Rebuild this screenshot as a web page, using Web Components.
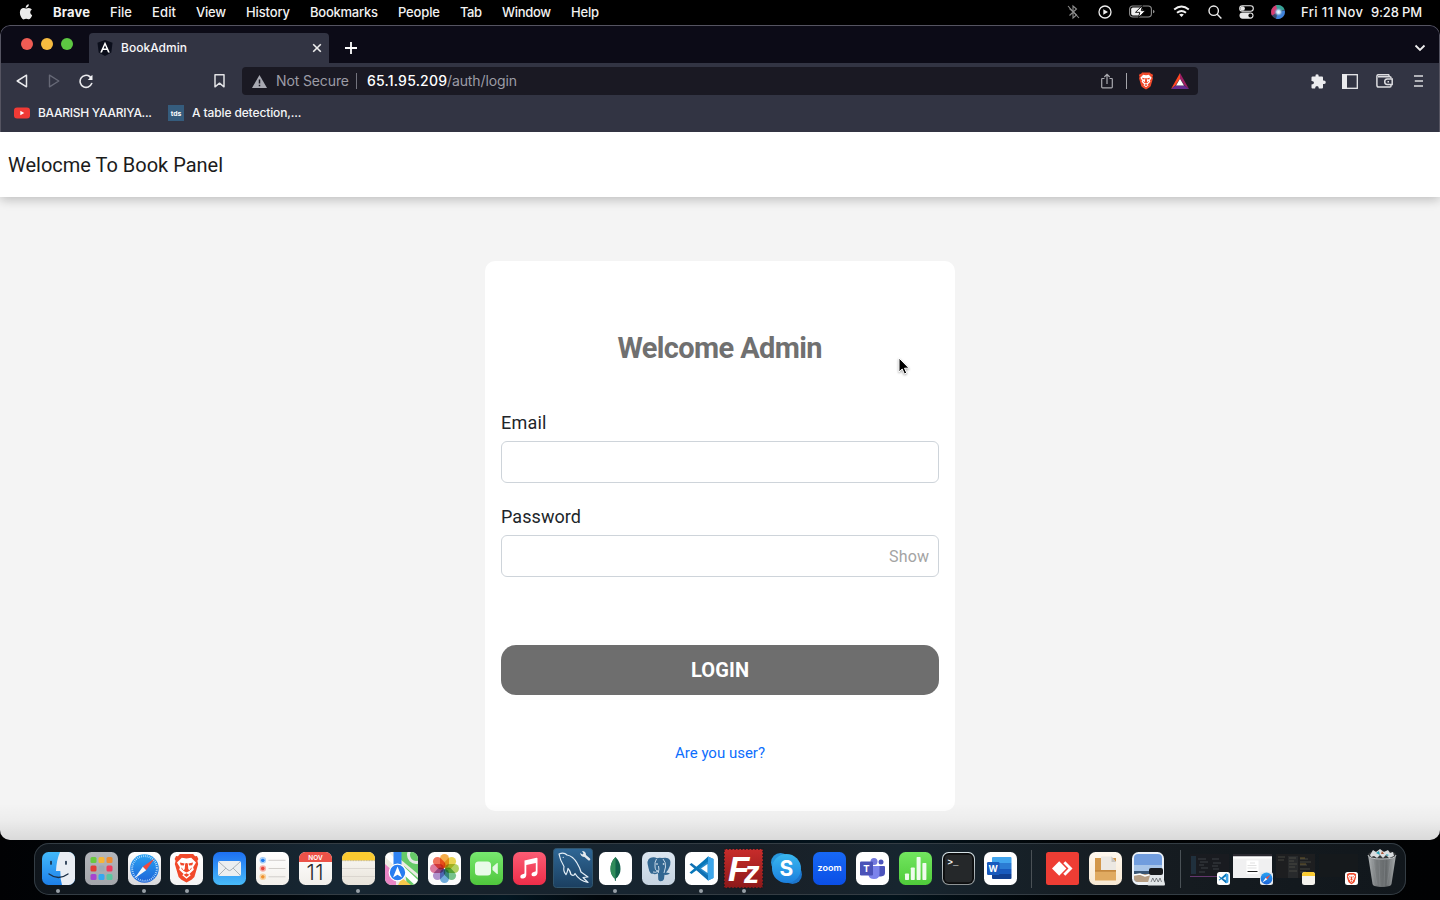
<!DOCTYPE html>
<html lang="en">
<head>
<meta charset="utf-8">
<title>BookAdmin</title>
<style>
html,body{margin:0;height:100%;background:#000;overflow:hidden}
body{font-family:Inter,"Liberation Sans",sans-serif}
</style>
</head>
<body>
<desk-top></desk-top>
<script>
const define = (name, css, html, setup) => customElements.define(name, class extends HTMLElement {
  constructor() {
    super();
    this.attachShadow({mode: 'open'});
  }
  connectedCallback() {
    if (this.ready) return;
    this.ready = true;
    const t = document.createElement('template');
    t.innerHTML = `<style>*{box-sizing:border-box}${css}</style>${typeof html === 'function' ? html(this) : html}`;
    this.shadowRoot.append(t.content.cloneNode(true));
    if (setup) setup(this);
  }
});

/* A one-line label tracked to an exact width. */
define('fit-label', ':host{display:block;white-space:nowrap;flex:none}span{display:inline-block}', '<span><slot></slot></span>', el => {
  const w = parseFloat(el.getAttribute('w'));
  el.style.width = w + 'px';
  const span = el.shadowRoot.querySelector('span');
  const n = el.textContent.length - 1;
  span.style.letterSpacing = ((w - span.getBoundingClientRect().width) / n).toFixed(3) + 'px';
});

const LION = `<path fill="#f1492a" d="M9 1h14l2 2.500 2-.3 1.500 3-1 2 .8 3.500-4 13.500-3 3L16 31l-5.300-2.800-3-3L3.700 11.700l.8-3.500-1-2L5 3.200l2 .3z"/><path fill="#fff" d="M11 5l5 .8 5-.8 5 5-3 5 .7 2.500-4.700 4.500 1.500 1.500L16 27l-4.500-3.500L13 22l-4.700-4.500L9 15l-3-5z"/><path fill="#f1492a" d="M9 10l5 1-.8 2.200-3.200-.4zM23 10l-5 1 .8 2.200 3.200-.4zM14.600 11l1.400-.4 1.400.4.5 6 2 1.500-3.900 2-3.900-2 2-1.500zM10 15l2.500 2-1 1zM22 15l-2.500 2 1 1zM13 23l3-1.700 3 1.700-3 2.200z"/>`;
const VS = `<path fill="#2489ca" d="M22.500 4L28 6.500v19L22.500 28 10 16.500z"/><path fill="#1070b3" d="M4 12l2-1.500L23 23.500V28z"/><path fill="#0877b9" d="M4 20l2 1.500L23 8.500V4z"/><path fill="#3ca5ea" d="M22.500 4L28 6.500v19L22.500 28z"/><path fill="#fff" d="M22 11.500v9L15.500 16z"/>`;
const COMPASS = `<circle cx="16" cy="16" r="14.300" fill="url(#c)"/><circle cx="16" cy="16" r="12.400" fill="none" stroke="#cfeaff" stroke-width="2" stroke-dasharray=".7 1.250"/><path fill="#f24a3f" d="M26 6L17.700 17.700 14.300 14.300z"/><path fill="#f4f7fa" d="M6 26L14.300 14.300 17.700 17.700z"/>`;
const grad = (id, a, b) => `<linearGradient id="${id}" x2="0" y2="1"><stop stop-color="${a}"/><stop offset="1" stop-color="${b}"/></linearGradient>`;
const tile = (a, b, body, defs = '') => `<svg viewBox="0 0 33 33" width="33" height="33"><defs>${grad('g', a, b)}<clipPath id="k"><rect width="33" height="33" rx="6.500"/></clipPath>${defs}</defs><g clip-path="url(#k)"><rect width="33" height="33" fill="url(#g)"/>${body}</g></svg>`;
const petals = () => ['#f5a02c','#e8cf35','#a5cb48','#5fbb79','#58a0d8','#a583c8','#d8638e','#ef5b3f'].map((c, i) =>
  `<rect x="12" y="2" width="9" height="14" rx="4.500" fill="${c}" fill-opacity=".85" transform="rotate(${i * 45} 16.500 16.500)" style="mix-blend-mode:multiply"/>`).join('');
const launch = () => ['#68c93f','#f5b638','#ef8d32','#e23c36','#9fa9b2','#ef3b5f','#a644cf','#36a7f0','#59c6a0'].map((c, i) =>
  `<rect x="${5.500 + (i % 3) * 8}" y="${5 + Math.floor(i / 3) * 8.500}" width="6" height="6" rx="1.500" fill="${c}"/>`).join('');

const ICONS = {
  finder: tile('#43b9fb', '#1d7fe8', `<path d="M18 0h15v33H20q-1.800-6-1.700-14H14Q14.500 8 18 0z" fill="#e9edf3"/><path d="M9 9.500v2.500M24 9.500v2.500" stroke="#1b2f47" stroke-width="1.700" stroke-linecap="round"/><path d="M7 22q9.500 7 19 0" fill="none" stroke="#1b2f47" stroke-width="1.300" stroke-linecap="round"/>`),
  launchpad: tile('#b3b6bb', '#a3a5aa', launch()),
  safari: tile('#fff', '#d8d8db', `<g transform="translate(.5 .5)">${COMPASS}</g>`, grad('c', '#2aa3f3', '#1c63d8')),
  brave: tile('#fff', '#f4f4f4', `<g transform="translate(1.300 1) scale(.95)">${LION}</g>`),
  mail: tile('#1d70f2', '#48bbf9', `<rect x="5" y="9" width="23" height="15" rx="2" fill="#eceef0"/><path d="M6 10l9 8q1.500 1.200 3 0l9-8M6 23l7-7M27 23l-7-7" fill="none" stroke="#a3aab1" stroke-width=".9"/>`),
  reminders: tile('#fff', '#f2efea', `<g fill="none" stroke-width="1.200"><circle cx="6.800" cy="8.300" r="2.700" stroke="#a3cdf8"/><circle cx="6.800" cy="16.500" r="2.700" stroke="#f5b0a8"/><circle cx="6.800" cy="24.800" r="2.700" stroke="#f7d3a0"/></g><circle cx="6.800" cy="8.300" r="1.900" fill="#1f7df0"/><circle cx="6.800" cy="16.500" r="1.900" fill="#e8483d"/><circle cx="6.800" cy="24.800" r="1.900" fill="#f0932e"/><path d="M12.500 8.300h17M12.500 16.500h17M12.500 24.800h17" stroke="#cdcac6" stroke-width=".9"/>`),
  calendar: tile('#fff', '#f1eeea', `<path fill="#ec5248" d="M0 0h33v10H0z"/><text x="16.500" y="7.900" font-size="6.500" font-weight="600" fill="#fff" text-anchor="middle" textLength="14.500">NOV</text><text x="16" y="28" font-size="21" font-weight="300" fill="#2c2c2c" text-anchor="middle" textLength="17">11</text>`),
  notes: tile('#fbfaf6', '#e8e3da', `<path fill="#fbcb31" d="M0 0h33v8.500H0z"/><path d="M0 8.700h33" stroke="#aaa38e" stroke-width=".8" stroke-dasharray=".8 .8"/><path d="M0 16.500h33M0 24.500h33" stroke="#d5d1ca" stroke-width=".8"/>`),
  maps: tile('#f1eee4', '#e8e8e2', `<path fill="#66cb68" d="M15 0h18v22L15 7z"/><path fill="#66cb68" d="M19 14l14 12v7H22z"/><path fill="#e985c4" d="M0 12l11 10v11H0z"/><path fill="#fff" d="M0 5L33 36V28L0-3z"/><path fill="#f7c84b" d="M17 26l9 7H13z"/><path fill="#2f83f3" d="M8.500 0h8v20h-8z"/><circle cx="31" cy="3" r="7.500" fill="none" stroke="#e6e9e7" stroke-width="3"/><circle cx="12.500" cy="20.500" r="8.300" fill="#287df1" stroke="#fff" stroke-width="1.200"/><path fill="#fff" d="M12.500 14.500l4.500 11-4.500-2.700L8 25.500z"/>`),
  photos: tile('#fff', '#fbfbfb', petals()),
  facetime: tile('#77e86f', '#4fc63c', `<rect x="5" y="9.500" width="16" height="14" rx="3.500" fill="#e9fbe9"/><path fill="#e3f9e3" d="M22.500 15l4.500-4q.8-.4.8.5v10q0 .9-.8.5l-4.500-4z"/>`),
  music: tile('#fb5c74', '#ee2d49', `<path fill="#fff" d="M11.500 8.500l12-2.700q1-.2 1 .8v14q0 3-3 3.600-2.800.5-3-1.500 0-2.300 3-2.900 1.300-.2 1.300-1V11l-9.500 2.100v9.700q0 3-3 3.600-2.800.5-3-1.500 0-2.300 3-2.900 1.200-.2 1.200-1z"/>`),
  mysql: `<svg viewBox="0 0 40 40" width="40" height="40"><defs>${grad('g', '#2f6796', '#1b3f60')}</defs><rect x=".5" y=".5" width="39" height="39" rx="3" fill="url(#g)" stroke="#31566f"/><path d="M6 6q5-2 8 1 6 1 10 8 3 5 4 9l7 5-5 .5 5 5q-9-2-13-9-1 3-4 1-1-4-3-6-1 5-2 6-3-3-2-8Q7 12 6 6zM10 9l.5.8" fill="none" stroke="#e4eef6" stroke-width="1.200" stroke-linejoin="round"/><path d="M29 3q4 0 4 4l4 3.500q1 2-1.500 2L31.500 9q-3.500 0-4.500-4l2.500 1.500 1-1z" fill="#e5eaef"/></svg>`,
  mongo: tile('#fff', '#fff', `<path fill="#116149" d="M16.500 5q5 5 5 12 0 6-4.500 9.500l-.3 2.500h-.7l-.3-2.500Q11.500 23 11.500 17q0-7 5-12z"/><path fill="#2f8b5a" d="M16.500 5v22q-5-3.500-5-10 0-7 5-12z"/>`),
  postgres: tile('#dbe6f1', '#c6d3e0', `<path fill="#336791" d="M8 6q4-1.500 7 .3 2-.8 5-.2 6-1.500 8 2 1.500 4-2 10l-2 2.500 4 .7q-2 2-5.500 1.500l-.5 4.200q-1 2.500-3.500 2.300-2.500-.3-2.300-3l-.2-5Q12 23 11 21.500 8 23 6.500 16 4 8 8 6z"/><path d="M14.500 7q-2 3-1.500 7 0 5 3 5M21 7q3 3 2.500 8L22 21M11 20q3 1 5-1M16.500 14q1 3-.3 7" fill="none" stroke="#d9e5f0" stroke-width=".9"/><circle cx="15" cy="12" r=".8" fill="#fff"/><circle cx="21.500" cy="12" r=".8" fill="#fff"/>`),
  vscode: tile('#fff', '#fff', `<g transform="translate(.500 .500)">${VS}</g>`),
  filezilla: `<svg viewBox="0 0 41 41" width="41" height="41"><defs>${grad('g', '#c82c2b', '#8c191a')}</defs><rect x="1" y="1" width="39" height="39" fill="url(#g)"/><rect x="1" y="1" width="39" height="39" fill="none" stroke="#171c22" stroke-width="1.500" stroke-dasharray="1.700 1.700"/><g font-family="Liberation Sans" font-style="italic" font-weight="700" fill="#fff"><text x="5" y="32.500" font-size="35">F<tspan dx="-5.500" dy="2.500" font-size="31">z</tspan></text></g></svg>`,
  skype: `<svg viewBox="0 0 33 33" width="33" height="33"><defs>${grad('g', '#39b8f0', '#1b7fdd')}</defs><circle cx="10.500" cy="10.500" r="9.500" fill="#2796dc"/><circle cx="22.500" cy="22.500" r="9.500" fill="#1c75cc"/><circle cx="16.500" cy="16.500" r="14.500" fill="url(#g)"/><text x="16.500" y="24" font-size="21" font-weight="700" fill="#fff" text-anchor="middle">S</text></svg>`,
  zoom: tile('#1768f5', '#0b4fe6', `<text x="16.500" y="19.300" font-size="9" font-weight="600" fill="#fff" text-anchor="middle" textLength="24" lengthAdjust="spacingAndGlyphs">zoom</text>`),
  teams: tile('#fff', '#fff', `<circle cx="18" cy="9.500" r="3.500" fill="#7278dd"/><circle cx="25" cy="10" r="2.500" fill="#4b53bc"/><path fill="#4b53bc" d="M22 14h6q1 0 1 1v6q0 3-4 3.500h-3z"/><path fill="#7b83eb" d="M13 14h10.500v8q0 5-5.500 5-5 0-5.500-4z"/><rect x="4" y="9.500" width="13" height="14" rx="1.200" fill="#4a52b8"/><text x="10.500" y="20" font-size="9.500" font-weight="700" fill="#fff" text-anchor="middle">T</text>`),
  numbers: tile('#72e65f', '#4fcb3a', `<g fill="#effbed"><rect x="6" y="21.500" width="4" height="6.500" rx=".7"/><rect x="11.800" y="15.500" width="4" height="12.500" rx=".7"/><rect x="17.600" y="5" width="4" height="23" rx=".7"/><rect x="23.400" y="11" width="4" height="17" rx=".7"/></g>`),
  terminal: tile('#d6e3e8', '#8d9294', `<rect x="1" y="1" width="31" height="31" rx="5.800" fill="#0c0d0e"/><rect x="2.800" y="2.800" width="27.400" height="27.400" rx="4" fill="#25282a"/><text x="5.500" y="12.500" font-size="9" font-weight="700" fill="#f4f4f4" font-family="Liberation Mono">&gt;_</text>`),
  word: tile('#fff', '#fff', `<path fill="#41a5ee" d="M9 5h17.500q1 0 1 1v5H8V6q0-1 1-1z"/><path fill="#2b7cd3" d="M8 11h19.500v6H8z"/><path fill="#185abd" d="M8 17h19.500v5H8z"/><path fill="#103f91" d="M8 22h19.500v4q0 1-1 1H9q-1 0-1-1z"/><rect x="3" y="10" width="12.500" height="13" rx="1.200" fill="#185abd"/><text x="9.200" y="20" font-size="9" font-weight="700" fill="#fff" text-anchor="middle">W</text>`),
  anydesk: `<svg viewBox="0 0 33 33" width="33" height="33"><rect width="33" height="33" rx="2.500" fill="#ee3d34"/><path fill="#fff" d="M13.200 9.300l7.200 7.200-7.200 7.200L6 16.500zM17.300 11.300l2-2 7.200 7.200-7.200 7.200-2-2 5.200-5.200z"/></svg>`,
  boxes: tile('#fff8ee', '#f7e8d3', `<path fill="#d3974a" d="M6 6h21v22H6z"/><path fill="#e0aa61" d="M6 19h21v9.500H6z"/><path fill="#ece8e2" d="M12 4.500h10.500L27 10v8H12z"/><path fill="#c8c4bf" d="M22.500 4.500L27 10h-4.500z"/><path d="M6 19h21" stroke="#b67832"/>`),
  preview: `<svg viewBox="0 0 35 35" width="35" height="35"><rect x="1" y="1" width="32" height="33" rx="6.500" fill="#edf2f8"/><rect x="3" y="3" width="28" height="28" rx="4" fill="#719dde"/><path fill="#a8c5e8" d="M3 14h28v7H3z"/><path fill="#395574" d="M3 20h28v3H3z"/><path fill="#b59d83" d="M3 23h28v4q0 4-4 4H7q-4 0-4-4z"/><path d="M3 24l6-1 5 2 7-2" stroke="#fff" stroke-width="1.500" fill="none"/><path fill="#e3e7e9" d="M20 21h11l3 12q0 1.500-1 1.500H17.500q-1 0-1-1.500z"/><rect x="18" y="17" width="14" height="7" rx="2" fill="#191b1e"/><path d="M20 31l1.800-4 1.800 4 1.800-4 1.800 4 1.800-4 1.500 4" stroke="#54585b" stroke-width=".7" fill="none"/></svg>`,
  trash: `<svg viewBox="0 0 30 40" width="30" height="40"><defs><linearGradient id="g"><stop stop-color="#aeb2b4"/><stop offset=".3" stop-color="#777b7d"/><stop offset=".65" stop-color="#64686a"/><stop offset="1" stop-color="#aaaeb0"/></linearGradient></defs><path fill="url(#g)" d="M1 7h28l-4.500 29q-.4 1.500-2 2-7.500 2-15 0-1.600-.5-2-2z"/><path fill="#343739" d="M1 7q0-4 14-4t14 4-14 4T1 7z"/><path fill="#d9dddf" d="M3 7l3-5 3 2 4-3 4 3 4-2 2 3 3-1 1 4-5 2-3-3-3 3-3-3-3 3-3-2-3 1z"/><path fill="#2ca4b8" d="M9 5l3-2 1 4zM19 6l3 1-2 1z"/><path fill="#ab5a3c" d="M15 3l2 3h-3z"/><path d="M1 7q0 4 14 4t14-4" fill="none" stroke="#c2c6c8"/><path d="M6 12l4 25M12 12l1 27M18 12l-1 27M24 12l-4 25" stroke="#a4a8aa" stroke-opacity=".3" stroke-width=".8"/></svg>`,

  apple: `<svg viewBox="0 0 16 18" width="14" height="16"><path fill="#ececec" d="M11.200 0q.2 1.700-1 3T7.700 4.300q-.2-1.600 1-2.900T11.200 0zM14.700 6.200q-1.900 1.200-1.900 3.200.1 2.500 2.200 3.400-.5 1.600-1.600 3.100-1.100 1.500-2.200 1.500-.7 0-1.500-.4-.8-.3-1.500-.3t-1.500.4q-.8.400-1.400.4-1.200 0-2.600-2.100Q1 12.800 1 9.800q0-2.400 1.200-3.900Q3.500 4.400 5.300 4.400q.8 0 1.700.4.900.3 1.200.3.300 0 1.300-.4t1.900-.4q2.100.1 3.300 1.900z"/></svg>`,
  bluetooth: `<svg viewBox="0 0 14 16" width="14" height="16" fill="none" stroke="#8d8d8d" stroke-width="1.100"><path d="M3.500 4.500l7 6.500-3.500 3V2l3.500 3-7 6.500"/><path d="M2 2l11 12"/></svg>`,
  play: `<svg viewBox="0 0 14 14" width="14" height="14"><circle cx="7" cy="7" r="6" fill="none" stroke="#eee" stroke-width="1.300"/><path fill="#eee" d="M5.300 4.200L10 7l-4.700 2.800z"/></svg>`,
  battery: `<svg viewBox="0 0 26 13" width="26" height="13"><rect x=".6" y="1" width="21.800" height="11" rx="3.200" fill="none" stroke="#8e8e8e" stroke-width="1.100"/><path d="M24 4.700q1.500.4 1.500 1.800T24 8.300z" fill="#8e8e8e"/><rect x="2.200" y="2.600" width="11" height="7.800" rx="1.700" fill="#eee"/><path d="M13.500 .5L6.500 7.300h4.300L9.500 12.500l7-6.800h-4.300z" fill="#fff" stroke="#000" stroke-width=".9"/></svg>`,
  wifi: `<svg viewBox="0 0 17 13" width="17" height="13" fill="none" stroke="#f1f1f1" stroke-width="2"><path d="M1.200 4.500q7.300-6 14.600 0M4 7.800q4.500-3.600 9 0"/><path d="M8.500 12l-2.300-2.400q2.300-1.700 4.600 0z" fill="#f1f1f1" stroke="none"/></svg>`,
  search: `<svg viewBox="0 0 14 14" width="14" height="14" fill="none" stroke="#eee" stroke-width="1.400"><circle cx="5.700" cy="5.700" r="4.700"/><path d="M9.200 9.200l4.200 4.200"/></svg>`,
  control: `<svg viewBox="0 0 15 14" width="15" height="14"><rect x=".7" y=".8" width="13.600" height="5.400" rx="2.700" fill="none" stroke="#e8e8e8" stroke-width="1.100"/><circle cx="3.600" cy="3.500" r="2.300" fill="#e8e8e8"/><rect x=".5" y="7.500" width="14" height="6.200" rx="3.100" fill="#e8e8e8"/><circle cx="11.400" cy="10.600" r="2" fill="#000"/></svg>`,
  siri: `<svg viewBox="0 0 14 14" width="14" height="14"><defs><radialGradient id="r"><stop stop-color="#fff"/><stop offset=".4" stop-color="#b9dcf5"/><stop offset="1" stop-color="#3967a8" stop-opacity="0"/></radialGradient></defs><circle cx="7" cy="7" r="7" fill="#394a6d"/><path fill="#d83d70" d="M7 7L1 10.500A7 7 0 0 1 6 .1z"/><path fill="#36a594" d="M7 7L5 .3a7 7 0 0 1 8.500 4.200z"/><path fill="#3d82dd" d="M7 7l6.700-1.500A7 7 0 0 1 5 13.700z"/><circle cx="7.500" cy="7" r="4.800" fill="url(#r)"/></svg>`,

  angular: `<svg viewBox="0 0 16 16" width="16" height="16"><path fill="#0b0e1b" d="M8 0l7.500 2.700-1.200 9.800L8 16l-6.300-3.500L.5 2.700z"/><path fill="#fff" fill-rule="evenodd" d="M8 1.800l4.800 10.700H11L10 10H6l-1 2.500H3.200zM8 5.200L6.600 8.500h2.800z"/></svg>`,
  close: `<svg viewBox="0 0 10 10" width="10" height="10"><path d="M1.200 1.200l7.600 7.600M8.800 1.200L1.200 8.800" stroke="#eee" stroke-width="1.600"/></svg>`,
  plus: `<svg viewBox="0 0 12 12" width="12" height="12"><path d="M6 0v12M0 6h12" stroke="#fff" stroke-width="1.800"/></svg>`,
  chevron: `<svg viewBox="0 0 12 8" width="12" height="8"><path d="M1.500 1.500L6 6l4.500-4.500" fill="none" stroke="#eee" stroke-width="1.800"/></svg>`,
  back: `<svg viewBox="0 0 12 14" width="12" height="14"><path d="M10.500 1.200v11.600L1.200 7z" fill="none" stroke="#e9e9ec" stroke-width="1.500" stroke-linejoin="round"/></svg>`,
  forward: `<svg viewBox="0 0 12 14" width="12" height="14"><path d="M1.500 1.200v11.600L10.800 7z" fill="none" stroke="#666876" stroke-width="1.400" stroke-linejoin="round"/></svg>`,
  reload: `<svg viewBox="0 0 15 15" width="15" height="15"><path d="M12.700 9.500A6 6 0 1 1 10.700 2.500" fill="none" stroke="#e9e9ec" stroke-width="1.600" stroke-linecap="round"/><path fill="#f3f3f5" d="M13.500 1v5H8.700l1.700-1.500V3z"/></svg>`,
  bookmark: `<svg viewBox="0 0 11 14" width="11" height="14"><path d="M1 .8h9v12L5.500 9.200 1 12.800z" fill="none" stroke="#e2e2e5" stroke-width="1.500" stroke-linejoin="round"/></svg>`,
  warn: `<svg viewBox="0 0 15 13" width="15" height="13"><path fill="#a8a9b2" d="M7.500 0L15 13H0z"/><path d="M7.500 4.500v4M7.500 9.700v1.500" stroke="#1a1923" stroke-width="1.500"/></svg>`,
  share: `<svg viewBox="0 0 12 16" width="12" height="16" fill="none" stroke="#aaaab0" stroke-width="1.200"><path d="M3.500 5.500H1.200q-.5 0-.5.500v8q0 .8.800.8h9q.8 0 .8-.8V6q0-.5-.5-.5H8.500M6 11V1.500M3.300 4L6 1.300 8.700 4"/></svg>`,
  shield: `<svg viewBox="2 0 28 32" width="16" height="18">${LION}</svg>`,
  bat: `<svg viewBox="0 0 18 16" width="18" height="16"><path fill="#ff4724" d="M9 0v5.500L4.500 12.500 0 16z"/><path fill="#9e1f63" d="M9 0l9 16-4.500-3.500L9 5.500z"/><path fill="#662d91" d="M0 16l4.500-3.500h9L18 16z"/><path fill="#fff" d="M9 5.800l4 6.700H5z"/></svg>`,
  puzzle: `<svg viewBox="0 0 15 15" width="15" height="15"><path fill="#ececef" d="M.5 3.500Q.5 2.500 1.500 2.500H4.500Q4 .2 6 .2t1.700 2.300H11q1 0 1 1v3q2.800-.4 2.800 1.700T12 10v3.500q0 1-1 1H7.800Q8 12 6 12t-1.900 2.500H1.500q-1 0-1-1v-3Q3 10.500 3 8.700T.5 7z"/></svg>`,
  sidebar: `<svg viewBox="0 0 16 15" width="16" height="15"><rect x=".7" y=".7" width="14.600" height="13.600" fill="none" stroke="#eaeaed" stroke-width="1.300"/><path fill="#eaeaed" d="M0 0h5v15H0z"/></svg>`,
  wallet: `<svg viewBox="0 0 17 14" width="17" height="14" fill="none" stroke="#dddde1" stroke-width="1.500"><path d="M15 4.500V3.700q0-1-1-1H2M13 2.700V1.500q0-.8-.9-.8H2.500Q.9.700.9 2.300v9q0 1.800 1.800 1.800H14q1 0 1-1v-1.300"/><path d="M16.200 5v5.500h-5q-2.500 0-2.500-2.700T11.200 5z"/><path d="M11.500 7.800h1.500"/></svg>`,
  menu: `<svg viewBox="0 0 11 12" width="11" height="12"><path d="M1 1h9M1.800 6h8.200M1 11h9" stroke="#dcdce0" stroke-width="1.500"/></svg>`,
  youtube: `<svg viewBox="0 0 16 12" width="16" height="12"><rect y=".5" width="16" height="11" rx="3" fill="#f03a35"/><path fill="#fff" d="M6.300 3.800L10.300 6l-4 2.200z"/></svg>`,
  tds: `<svg viewBox="0 0 16 16" width="16" height="16"><rect width="16" height="16" fill="#355c7d"/><text x="8" y="10.500" font-size="6.800" font-weight="700" fill="#fff" text-anchor="middle" textLength="10.500">tds</text></svg>`
};

/* Glyph centred in a cell of the given width. */
define('ui-icon', ':host{display:flex;flex:none;align-items:center;justify-content:center}svg{display:block;flex:none;font-family:Inter,sans-serif}', el => ICONS[el.getAttribute('name')], el => {
  if (el.hasAttribute('w')) el.style.width = el.getAttribute('w') + 'px';
});

define('menu-bar', `
:host{display:flex;height:25px;background:#000;color:#f2f2f2;font:500 13px/24px Inter,sans-serif;align-items:center;padding-bottom:2px}
nav{display:flex;gap:20px;flex:1}
b{font-weight:700}
.r{display:flex;align-items:center;padding-right:18px}
.t{display:flex;gap:8px;margin-left:12px}
`, `<ui-icon name="apple" w="14" style="margin-left:19px;"></ui-icon>
<nav style="margin-left:20px"><fit-label w="37"><b>Brave</b></fit-label>${[['File',22],['Edit',24],['View',30],['History',44],['Bookmarks',68],['People',42],['Tab',22],['Window',49],['Help',28]].map(([t, w]) => `<fit-label w="${w}">${t}</fit-label>`).join('')}</nav>
<div class="r"><ui-icon name="bluetooth" w="26"></ui-icon><ui-icon name="play" w="37"></ui-icon><ui-icon name="battery" w="37"></ui-icon><ui-icon name="wifi" w="42"></ui-icon><ui-icon name="search" w="25"></ui-icon><ui-icon name="control" w="39"></ui-icon><ui-icon name="siri" w="23"></ui-icon>
<div class="t"><fit-label w="62">Fri 11 Nov</fit-label><fit-label w="51">9:28 PM</fit-label></div></div>`);

define('tab-strip', `
:host{display:flex;height:37px;background:#0c0b17;align-items:stretch}
.l{display:flex;gap:8px;padding:12px 16px 0 20px;width:88px}
i{width:12px;height:12px;border-radius:50%;background:var(--c)}
.tab{width:240px;margin-top:7px;height:30px;background:#323443;border-radius:4px 4px 0 0;display:flex;align-items:center;padding:0 7px 0 8px;color:#f7f7f9;font:500 12px/16px Inter,sans-serif}
.tab fit-label{margin-left:8px;flex:none}
.x{margin-left:auto}
.p{margin:7px 0 0 16px}.c{margin:7px 13px 0 auto}
`, `<div class="l"><i style="--c:#ee5c54"></i><i style="--c:#f6bb40"></i><i style="--c:#5dc842"></i></div>
<div class="tab"><ui-icon name="angular"></ui-icon><fit-label w="66">BookAdmin</fit-label><ui-icon class="x" name="close"></ui-icon></div>
<ui-icon class="p" name="plus"></ui-icon><ui-icon class="c" name="chevron"></ui-icon>`);

define('tool-bar', `
:host{display:flex;height:36px;align-items:center;padding-left:6px;padding-right:5px}
.url{display:flex;align-items:center;width:956px;height:28px;margin-left:9.500px;background:#1a1923;border-radius:4px;padding:0 9px 0 10px;color:#9c9ca6;font:400 14px/20px Inter,sans-serif}
.w{margin-left:9px}.s{width:1px;height:16px;background:#73737d;margin:0 10px 0 7px}
.h{color:#fff;font-weight:500}.e{display:flex;align-items:center;margin-left:auto}
.a{display:flex;margin-left:auto}
`, `<ui-icon name="back" w="30"></ui-icon><ui-icon name="forward" w="34"></ui-icon><ui-icon name="reload" w="30"></ui-icon><ui-icon name="bookmark" w="26" style="margin-left:105.500px"></ui-icon>
<div class="url"><ui-icon name="warn" w="15"></ui-icon><fit-label class="w" w="73">Not Secure</fit-label><div class="s"></div><fit-label class="h" w="80">65.1.95.209</fit-label><fit-label w="70">/auth/login</fit-label>
<div class="e"><ui-icon name="share"></ui-icon><div class="s" style="margin:0 11px 0 13px;background:#a5a5ab"></div><ui-icon name="shield" w="16"></ui-icon><ui-icon name="bat" w="18" style="margin-left:17px"></ui-icon></div></div>
<div class="a"><ui-icon name="puzzle" w="32"></ui-icon><ui-icon name="sidebar" w="32"></ui-icon><ui-icon name="wallet" w="36"></ui-icon><ui-icon name="menu" w="32"></ui-icon></div>`);

define('bookmark-bar', `
:host{display:flex;height:33px;align-items:center;padding:0 0 6px 13px;color:#f4f4f6;font:500 12px/16px Inter,sans-serif}
fit-label{margin-left:8px}
`, `<ui-icon name="youtube"></ui-icon><fit-label w="114">BAARISH YAARIYA...</fit-label><ui-icon name="tds" style="margin-left:16px"></ui-icon><fit-label w="109.500">A table detection,...</fit-label>`);

define('form-field', `
:host{display:block;font:400 18px/27px Roboto,sans-serif;color:#212529}
label{display:block;margin-bottom:5px}
.b{display:flex;align-items:center;height:42px;border:1px solid #ced4da;border-radius:6px;background:#fff;padding-right:9px}
input{flex:1;min-width:0;border:0;outline:0;background:none;height:38px}
`, el => `<label><fit-label w="${el.getAttribute('w')}">${el.getAttribute('label')}</fit-label></label><div class="b"><input type="${el.getAttribute('type')}"><slot></slot></div>`);

define('login-card', `
:host{display:flex;flex-direction:column;width:470px;height:550px;background:#fff;border-radius:10px;padding:69px 16px 0;font-family:Roboto,sans-serif}
h1{margin:0;display:flex;justify-content:center;font:700 29px/36px Roboto,sans-serif;color:#707070}
.one{margin-top:43px}.two{margin-top:20px}
.show{font-size:16px;color:#a4a4a4}
button{margin-top:68px;height:50px;border:0;border-radius:15px;background:#6e6e6e;color:#fff;display:flex;align-items:center;justify-content:center;font:700 20px/24px Roboto,sans-serif;padding:0}
a{display:flex;justify-content:center;margin-top:46px;font:400 15px/24px Roboto,sans-serif;color:#0d6efd;text-decoration:none}
`, `<h1><fit-label w="205">Welcome Admin</fit-label></h1>
<form-field class="one" label="Email" w="45.500" type="text"></form-field>
<form-field class="two" label="Password" w="80" type="password"><fit-label class="show" w="40">Show</fit-label></form-field>
<button><fit-label w="58">LOGIN</fit-label></button><a><fit-label w="90">Are you user?</fit-label></a>`);

define('book-page', `
:host{display:flex;flex-direction:column;height:708px;background:#f4f4f4;overflow:hidden;position:relative}
:host::after{content:"";position:absolute;left:0;right:0;bottom:0;height:36px;background:linear-gradient(rgba(0,0,0,0),rgba(0,0,0,.03) 45%,rgba(0,0,0,.11));pointer-events:none}
header{height:65px;background:#fff;box-shadow:0 3px 10px rgba(0,0,0,.22);display:flex;align-items:center;padding-left:8px;font:400 20px/30px Roboto,sans-serif;color:#1b1b1b}
main{display:flex;justify-content:center;padding-top:64px}
`, `<header><fit-label w="215">Welocme To Book Panel</fit-label></header><main><login-card></login-card></main>`);

define('browser-window', `
:host{display:block;height:815px;border-radius:10px;overflow:hidden;background:#0c0b17}
.chrome{background:#323443;border:1px solid #555461;border-bottom:0;border-radius:10px 10px 0 0;overflow:hidden;height:107px}
`, `<div class="chrome"><tab-strip></tab-strip><tool-bar></tool-bar><bookmark-bar></bookmark-bar></div><book-page></book-page>`);

define('dock-item', `
:host{display:grid;grid-template-rows:50px;width:42.85px;flex:none;justify-items:center;align-items:center;position:relative;height:52px}
.d{position:absolute;bottom:2.500px;left:calc(50% - 2px);width:4px;height:4px;border-radius:50%;background:#99a1a8}
`, el => `<ui-icon name="${el.getAttribute('name')}"></ui-icon>${el.hasAttribute('open') ? '<div class="d"></div>' : ''}`);

const THUMBS = {
  code: `<rect width="39" height="23" fill="#191b20"/><path d="M1 2h5v18H1z" fill="#20303d"/><path d="M8 5h8M10 8h8M9 11h5M11 14h7M9 18h6M22 5h7M23 9h8M22 12h6M23 15h6" stroke="#555a60" stroke-width=".6"/><path d="M0 22.500h39" stroke="#65376f"/>`,
  page: `<rect width="39" height="24" fill="#f0f0f1"/><path fill="#2a2930" d="M0 0h39v2.500H0z"/><path fill="#fff" d="M0 2.500h39v2H0zM13.500 6.500h12V20h-12z"/><path d="M17 9h5M14.500 11.500h9M14.500 14h9" stroke="#ccc" stroke-width=".6"/><path d="M14.500 17.500h10" stroke="#222"/>`,
  notes: `<rect width="39" height="24" fill="#1d1e20"/><path d="M12 2h10v22H12z" fill="#282a2c"/><path d="M2 3h7M2 6h6M13 4h7M13 7h5M13 10h8M13 13h6M13 17h8M24 5h8M24 8h11M24 11h7M24 15h10M24 18h6" stroke="#57564f" stroke-width=".7"/><path d="M24 4h5M24 10h6" stroke="#977831" stroke-width=".6"/>`,
  blank: `<rect width="39" height="23" fill="#15191c"/>`
};
const BADGES = {
  vscode: `<rect width="13" height="13" rx="2.500" fill="#fff"/><g transform="scale(.4)">${VS}</g>`,
  safari: `<defs>${grad('c', '#2aa3f3', '#1c63d8')}</defs><rect width="13" height="13" rx="2.500" fill="#e4e8ed"/><g transform="scale(.406)"><circle cx="16" cy="16" r="14.500" fill="url(#c)"/><path fill="#f24a3f" d="M26 6L18 18 14 14z"/><path fill="#fff" d="M6 26L14 14 18 18z"/></g>`,
  notes: `<rect width="13" height="13" rx="2.500" fill="#f5f3ed"/><path fill="#fbcb31" d="M2.500 0h8Q13 0 13 2.500V4H0V2.500Q0 0 2.500 0z"/>`,
  brave: `<rect width="13" height="13" rx="2.500" fill="#fff"/><g transform="translate(.5 .5) scale(.375)">${LION}</g>`
};
define('dock-window', `
:host{display:block;position:relative;width:42.85px;height:52px;flex:none}
.t{display:block;margin:12px 0 0 1.500px}
.b{position:absolute;right:2px;top:30px}
`, el => `<svg class="t" width="39" height="25" viewBox="0 0 39 25">${THUMBS[el.getAttribute('thumb')]}</svg><svg class="b" width="13" height="13" viewBox="0 0 13 13">${BADGES[el.getAttribute('badge')]}</svg>`);

define('app-dock', `
:host{display:flex;width:1372px;height:52px;margin:3px 0 0 34px;border-radius:15px;background:linear-gradient(90deg,#10161c,#172733 22%,#17222b 33%,#172530 43%,#192027 53%,#17252f 63%,#161c21 80%,#11171c);box-shadow:inset 0 0 0 1px #343d44;padding-left:3px}
hr{border:0;margin:7px 9px 0 9px;width:1px;height:38px;background:#4a5156;flex:none}
.end{margin:7px 8px 0 10px}
dock-window{top:-1px}
`, `${[['finder',1],['launchpad'],['safari',1],['brave',1],['mail'],['reminders'],['calendar'],['notes',1],['maps'],['photos'],['facetime'],['music'],['mysql'],['mongo',1],['postgres'],['vscode',1],['filezilla',1],['skype'],['zoom'],['teams'],['numbers'],['terminal'],['word']].map(([n, o]) => `<dock-item name="${n}" ${o ? 'open' : ''}></dock-item>`).join('')}
<hr><dock-item name="anydesk"></dock-item><dock-item name="boxes"></dock-item><dock-item name="preview"></dock-item><hr class="end">
<dock-window thumb="code" badge="vscode"></dock-window><dock-window thumb="page" badge="safari"></dock-window><dock-window thumb="notes" badge="notes"></dock-window><dock-window thumb="blank" badge="brave"></dock-window><dock-item name="trash"></dock-item>`);

/* The pointer floats over the desktop. */
define('mouse-pointer', ':host{display:block;position:absolute;left:898px;top:357px;filter:drop-shadow(0 1px 1px rgba(0,0,0,.35))}svg{display:block}',
`<svg width="12" height="18" viewBox="0 0 12 18"><path d="M1 1v14l3.200-3 2.200 5 2.300-1-2.200-4.800H11z" fill="#000" stroke="#fff" stroke-width="1"/></svg>`);

define('desk-top', ':host{display:block;position:relative;width:1440px;height:900px;overflow:hidden;background:linear-gradient(#000,#000 840px,transparent 840px),linear-gradient(90deg,#010204,#02080d 20%,#031722 35%,#02070b 42%,#031019 50%,#03131c 62%,#010305 75%,#010203)}',
'<menu-bar></menu-bar><browser-window></browser-window><app-dock></app-dock><mouse-pointer></mouse-pointer>');
</script>
</body>
</html>
